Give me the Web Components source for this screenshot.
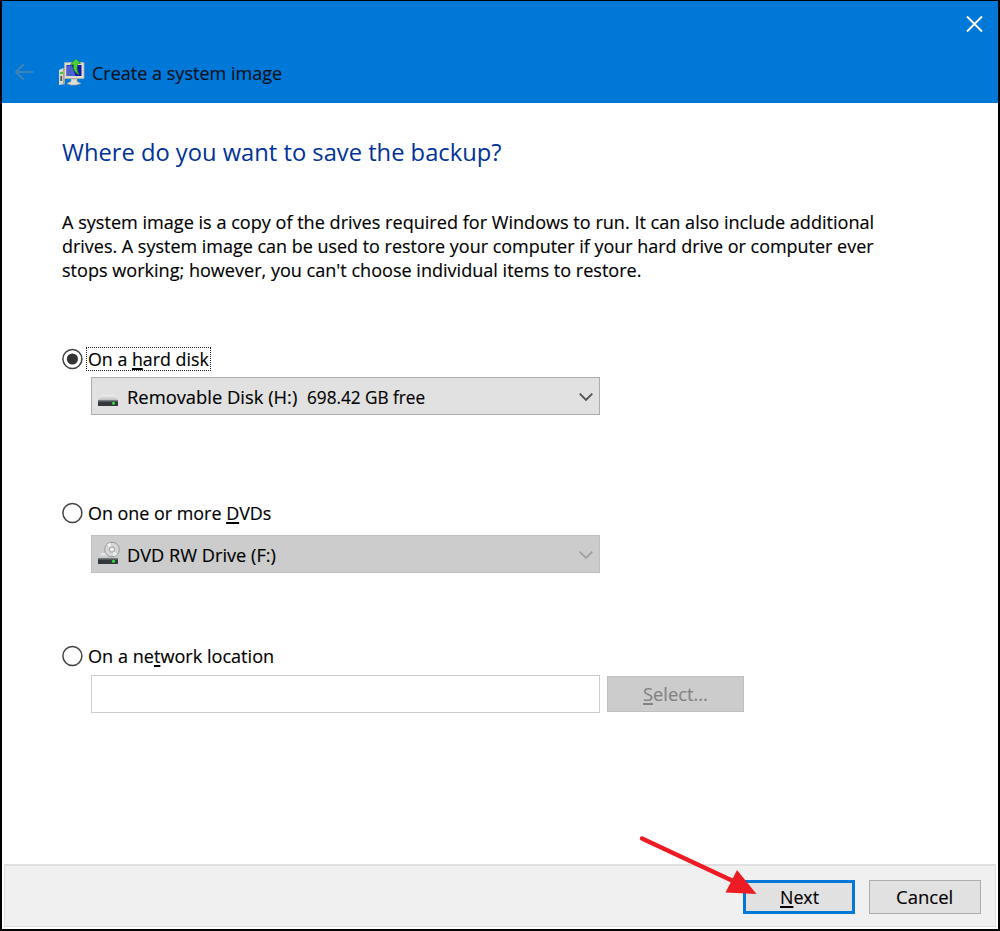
<!DOCTYPE html>
<html lang="en">
<head>
<meta charset="utf-8">
<title>Create a system image</title>
<style>
html,body{margin:0;height:100%;overflow:hidden}
body{font:18.700px/24px "Open Sans","Noto Sans",sans-serif;color:#000;-webkit-text-stroke:.15px}
</style>
</head>
<body>
<wizard-window></wizard-window>
<script>
const define = (name, html, setup) => customElements.define(name, class extends HTMLElement {
  connectedCallback() {
    if (this.shadowRoot) return;
    const t = document.createElement('template');
    t.innerHTML = html;
    this.attachShadow({mode: 'open'}).append(t.content.cloneNode(true));
    if (setup) setup(this, this.shadowRoot);
  }
});

/* Condenses a line of text to the width given in its attribute. */
define('fit-text', `<style>
:host{display:block;white-space:pre;flex:none;text-align:left}
span{display:inline-block;transform-origin:0 50%;vertical-align:top}
</style><span><slot></slot></span>`, (el, root) => {
  const w = +el.getAttribute('width');
  const s = root.querySelector('span');
  el.style.width = w + 'px';
  s.style.transform = 'scaleX(' + w / s.offsetWidth + ')';
});

define('title-bar', `<style>
:host{display:flex;flex-direction:column;height:102px;background:#0078d7}
.top{display:flex;justify-content:flex-end;height:52px}
.close{width:18px;height:18px;margin:14px 15px 0 0}
.row{display:flex;align-items:flex-start}
.back{width:22px;height:20px;margin:9px 0 0 11px}
.pc{width:28px;height:28px;margin:5px 0 0 23px}
fit-text{margin:8px 0 0 6px;color:#05101c}
</style>
<div class="top"><svg class="close" viewBox="0 0 18 18" fill="none" stroke="#fff" stroke-width="1.8"><path d="M2 1.5 17 16.5M17 1.5 2 16.5"/></svg></div>
<div class="row">
<svg class="back" viewBox="0 0 22 20" fill="none" stroke="#3c82b4" stroke-width="2.200"><path d="M20.500 10H3M11 2 3 10l8 8"/></svg>
<svg class="pc" viewBox="0 0 28 28">
<path d="M1 12 4 10.500h3V26L1 27z" fill="#ddd8cc"/><path d="M5 11h2v15l-2 .5z" fill="#a9a497"/><path d="M2 14l3-.3v2.2l-3 .3z" fill="#42c92e"/><path d="M3.200 18v5" stroke="#555" stroke-width="1.8"/>
<path d="M6.500 4.500H26V20.500H6.500z" fill="#dedbd2" stroke="#b3afa4" stroke-width=".7"/>
<path d="M8.500 7H23.500V18H8.500z" fill="#1218a8"/><path d="M9 7.500h5L17.500 18H9z" fill="#4860d0"/>
<path d="M13 21h6v2.500l4 2-5 1.500h-5l-4-1.500 4-2z" fill="#e0ddd3" stroke="#aaa69a" stroke-width=".6"/>
<path d="M21 16.500C15.500 14 15 9.500 16 6.500H12.500L18 1 22.500 5.500H20C18.500 9 18.500 13 21 16.500z" fill="#4ed032" stroke="#249d1e" stroke-width=".8"/>
</svg>
<fit-text width="190">Create a system image</fit-text>
</div>`);

define('radio-option', `<style>
:host{display:flex;height:24px;align-items:center}
svg{width:22px;height:22px;flex:none;margin-left:-1px}
.label{height:24px;padding:0 1px;margin-left:3px;box-sizing:border-box;border:1px solid transparent;display:flex;align-items:center}
:host([checked]) .label{border:1.500px dotted #222}
.dot{display:none}
:host([checked]) .dot{display:block}
</style>
<svg viewBox="0 0 22 22"><circle cx="11.400" cy="11" r="9.500" fill="#fff" stroke="#444" stroke-width="1.500"/><circle class="dot" cx="11.400" cy="11" r="5.600" fill="#333"/></svg>
<div class="label"><slot></slot></div>`);

define('drive-select', `<style>
:host{display:flex;align-items:center;box-sizing:border-box;width:509px;height:38px;border:1.500px solid #acacac;background:#e1e1e1;margin-left:29px;padding:1px 5px 0 5px}
:host([disabled]){background:#ccc;border-color:#bfbfbf}
.icon{width:24px;height:28px;margin-right:6px}
.chev{width:16px;height:12px;margin-left:auto;stroke:#505050}
:host([disabled]) .chev{stroke:#a0a0a0}
.disc{display:none}
:host([disabled]) .disc{display:block}
</style>
<svg class="icon" viewBox="0 0 24 28">
<defs><linearGradient id="g" x2="0" y2="1"><stop stop-color="#f0f0f0"/><stop offset="1" stop-color="#b9bcbf"/></linearGradient></defs>
<path d="M4.500 12h13L21 17.500H1z" fill="url(#g)"/>
<g class="disc"><circle cx="15" cy="8.500" r="7.300" fill="#d5d7d8" stroke="#959b9e" stroke-width="1"/><path d="M15 8.500 10 3.500 13 1.800zM15 8.500l5 5-3 1.800z" fill="#f4f4f4"/><circle cx="15" cy="8.500" r="2.700" fill="#eee" stroke="#999"/></g>
<rect x="1" y="17.500" width="20" height="5.500" fill="#34383b"/><path d="M1 18h20" stroke="#73787b"/><circle cx="16.500" cy="20.300" r="1.500" fill="#35e443"/>
</svg>
<slot></slot>
<svg class="chev" viewBox="0 0 16 12" fill="none" stroke-width="1.800"><path d="M1.700 2.700 8 9l6.300-6.300"/></svg>`);

define('push-button', `<style>
:host{display:flex;align-items:center;justify-content:center;box-sizing:border-box;width:112px;height:34px;border:1.500px solid #adadad;background:#e1e1e1}
:host([default]){border:3px solid #0078d7}
:host([disabled]){width:137px;height:36px;background:#ccc;border-color:#bfbfbf;color:#838383;padding-bottom:1px}
</style><slot></slot>`);

define('callout-arrow', `<style>
:host{position:absolute;left:636px;top:833px;width:124px;height:64px}
svg{display:block}
</style><svg width="124" height="64" viewBox="0 0 124 64"><path d="M6 5.500 97 48" stroke="#ed1c24" stroke-width="4.500" stroke-linecap="round"/><path d="M101 37 120.500 61 89.500 59.500z" fill="#ed1c24"/></svg>`);

define('wizard-page', `<style>
:host{display:block;height:761px;padding:33px 0 0 60px;box-sizing:border-box;background:#fff}
h1{font-size:24.500px;line-height:32px;font-weight:400;color:#003399;margin:0;-webkit-text-stroke:0}
.copy{margin:42px 0 0}
.first{margin-top:65px}
.second{margin-top:86px}
.third{margin-top:71px}
drive-select{margin-top:6px}
.second + drive-select{margin-top:10px}
.net{display:flex;align-items:center;margin:7px 0 0 29px;gap:7px}
.input{box-sizing:border-box;width:509px;height:38px;border:1.500px solid #ccc;background:#fff}
.free{margin-left:10px}
u{text-decoration:underline 1.500px;text-underline-offset:2px;text-decoration-skip-ink:none}
</style>
<h1><fit-text width="439.500">Where do you want to save the backup?</fit-text></h1>
<div class="copy">
<fit-text width="812">A system image is a copy of the drives required for Windows to run. It can also include additional</fit-text>
<fit-text width="812">drives. A system image can be used to restore your computer if your hard drive or computer ever</fit-text>
<fit-text width="579">stops working; however, you can't choose individual items to restore.</fit-text>
</div>
<radio-option class="first" checked><fit-text width="121">On a <u>h</u>ard disk</fit-text></radio-option>
<drive-select><fit-text width="170">Removable Disk (H:)</fit-text><fit-text class="free" width="118.500">698.42 GB free</fit-text></drive-select>
<radio-option class="second"><fit-text width="183">On one or more <u>D</u>VDs</fit-text></radio-option>
<drive-select disabled><fit-text width="149">DVD RW Drive (F:)</fit-text></drive-select>
<radio-option class="third"><fit-text width="186">On a ne<u>t</u>work location</fit-text></radio-option>
<div class="net"><div class="input"></div><push-button disabled><fit-text width="64.500"><u>S</u>elect...</fit-text></push-button></div>`);

define('wizard-footer', `<style>
:host{display:flex;justify-content:flex-end;gap:14px;box-sizing:border-box;height:63px;margin:0 2px;border:1px solid #dfdfdf;border-top-width:2px;background:#f0f0f0;padding:14px 14px 0 0}
u{text-decoration:underline 1.500px;text-underline-offset:2px;text-decoration-skip-ink:none}
</style>
<push-button default><fit-text width="39"><u>N</u>ext</fit-text></push-button>
<push-button><fit-text width="57.500">Cancel</fit-text></push-button>`);

define('wizard-window', `<style>
:host{display:block;position:relative;box-sizing:border-box;width:1000px;height:931px;border:solid #000;border-width:1px 2px 2px;background:#fff;overflow:hidden}
callout-arrow{margin:-1px 0 0 -2px}
</style>
<title-bar></title-bar><wizard-page></wizard-page><wizard-footer></wizard-footer><callout-arrow></callout-arrow>`);
</script>
</body>
</html>
